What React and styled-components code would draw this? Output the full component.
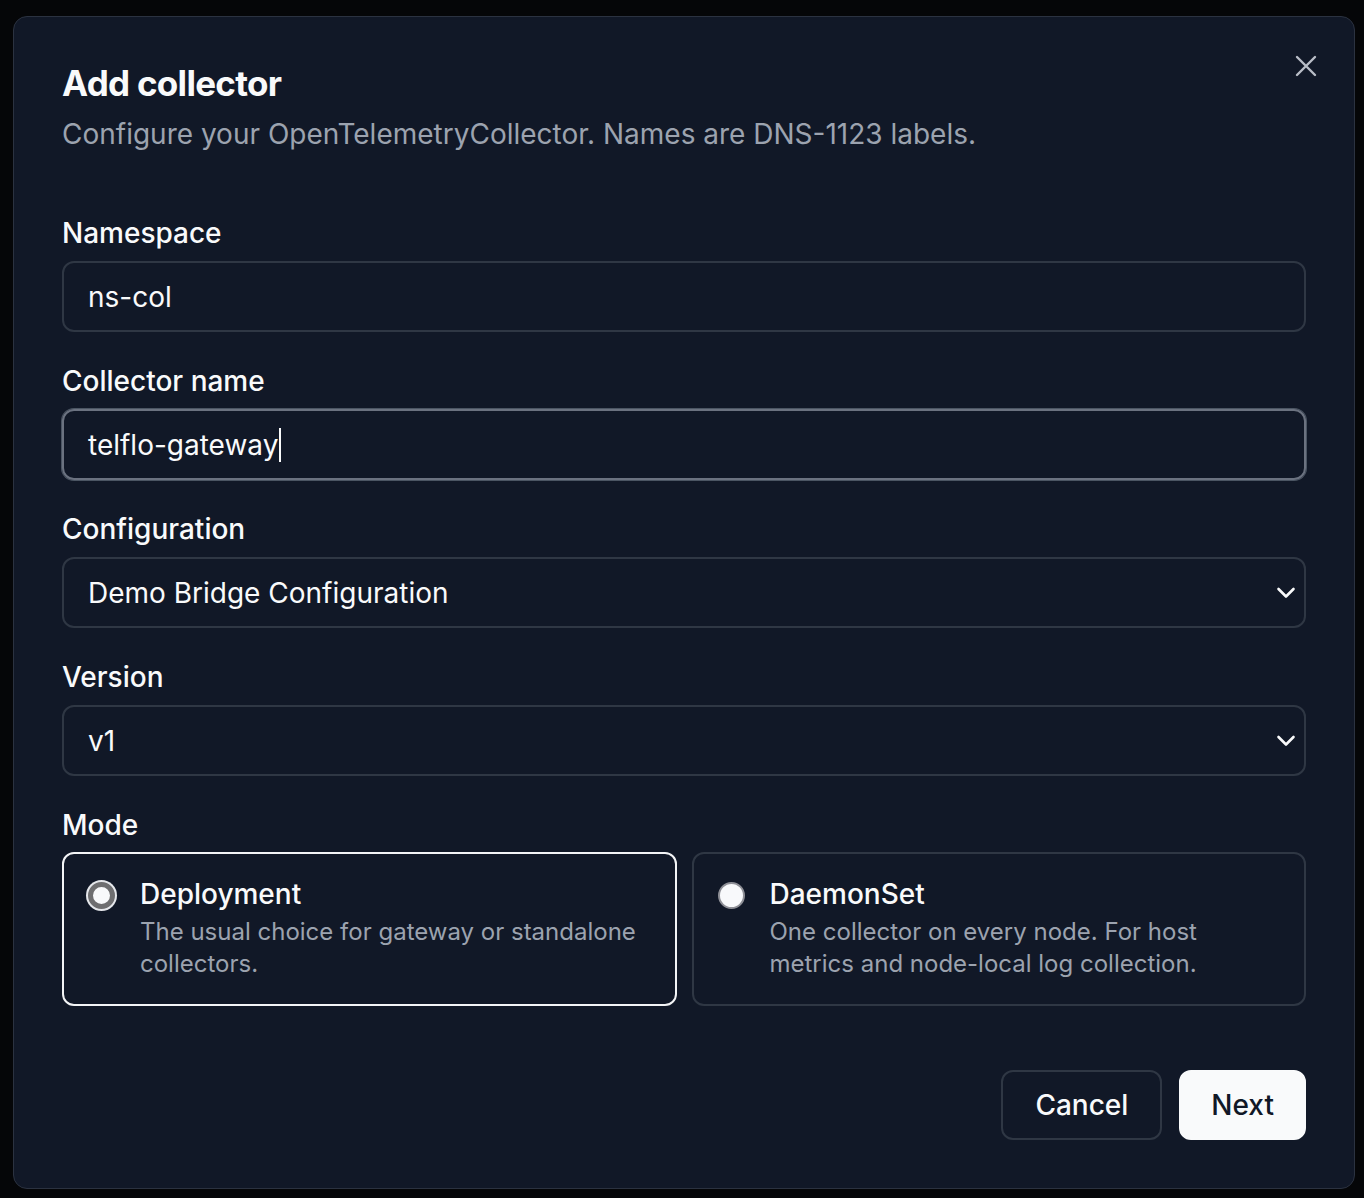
import React from "react";
import styled, { createGlobalStyle } from "styled-components";

const Global = createGlobalStyle`
  html, body { margin: 0; padding: 0; background: #050608; }
  body { font-family: Inter, "Noto Sans", sans-serif; -webkit-font-smoothing: antialiased; }
  * { box-sizing: border-box; }
`;

const Page = styled.div`
  min-height: 1198px;
  padding: 16px 9px 8px 13px;
  background: #050608;
`;

const Dialog = styled.div`
  position: relative;
  width: 1342px;
  background: #111827;
  border: 1px solid #2b3240;
  border-radius: 14px;
  padding: 48px;
  color: #f9fafb;
`;

const Close = styled.button`
  position: absolute;
  top: 31px;
  right: 30px;
  width: 36px;
  height: 36px;
  padding: 0;
  border: 0;
  background: transparent;
  color: #b9bec7;
  display: flex;
  align-items: center;
  justify-content: center;
`;

const Header = styled.div`
  display: flex;
  flex-direction: column;
  gap: 13px;
`;

const Title = styled.h2`
  margin: 0;
  font-size: 35px;
  line-height: 36px;
  font-weight: 700;
  letter-spacing: -0.02em;
  color: #f9fafb;
`;

const Subtitle = styled.p`
  margin: 0;
  font-size: 28px;
  line-height: 40px;
  color: #9ca3af;
`;

const Form = styled.div`
  margin-top: 65px;
  display: flex;
  flex-direction: column;
  gap: 35px;
`;

const Field = styled.div`
  display: flex;
  flex-direction: column;
  gap: ${(p) => p.$gap || 14}px;
`;

const Label = styled.div`
  font-size: 28px;
  line-height: 28px;
  font-weight: 500;
  color: #f9fafb;
`;

const Control = styled.div`
  height: 71px;
  border-radius: 12px;
  border: ${(p) => (p.$focused ? "2px solid #6b7280" : "2px solid #2f3744")};
  box-shadow: ${(p) => (p.$focused ? "0 0 0 1px #4b5563" : "none")};
  padding: 0 ${(p) => (p.$select ? 8 : 24)}px 0 24px;
  display: flex;
  align-items: center;
  justify-content: space-between;
  font-size: 28px;
  color: #f9fafb;
`;

const Value = styled.span`
  display: inline-flex;
  align-items: center;
`;

const Caret = styled.span`
  display: inline-block;
  width: 2px;
  height: 34px;
  background: #f9fafb;
  margin-left: 1px;
`;

const Cards = styled.div`
  display: grid;
  grid-template-columns: 1fr 1fr;
  gap: 15px;
`;

const Card = styled.div`
  border-radius: 12px;
  border: 2px solid ${(p) => (p.$selected ? "#f3f4f6" : "#2f3744")};
  padding: 26px 24px 24px;
  display: flex;
  gap: 25px;
  align-items: flex-start;
`;

const Radio = styled.span`
  flex: none;
  margin-top: 2px;
  width: 27px;
  height: 27px;
  border-radius: 50%;
  background: #f8f9fb;
  ${(p) =>
    p.$checked
      ? `border: 5px solid #6e6e70; box-shadow: 0 0 0 2px #e5e7eb;`
      : `border: 2px solid #8e8f96;`}
`;

const CardText = styled.div`
  display: flex;
  flex-direction: column;
  gap: 8px;
`;

const CardTitle = styled.div`
  font-size: 28px;
  line-height: 28px;
  font-weight: 500;
  color: #f9fafb;
`;

const CardDesc = styled.div`
  font-size: 24px;
  line-height: 32px;
  color: #9ca3af;
`;

const Footer = styled.div`
  margin-top: 64px;
  display: flex;
  justify-content: flex-end;
  gap: 17px;
`;

const Button = styled.button`
  height: 70px;
  padding: 0 ${(p) => (p.$primary ? 30 : 32)}px;
  border-radius: 12px;
  font-family: inherit;
  font-size: 28px;
  font-weight: 500;
  border: 2px solid ${(p) => (p.$primary ? "#f9fafb" : "#2f3744")};
  background: ${(p) => (p.$primary ? "#f9fafb" : "transparent")};
  color: ${(p) => (p.$primary ? "#111827" : "#f9fafb")};
`;

const Chevron = () => (
  <svg width="20" height="12" viewBox="0 0 20 12" fill="none">
    <polyline points="2.5,2 10,9.5 17.5,2" stroke="#f9fafb" strokeWidth="2.6" strokeLinecap="round" strokeLinejoin="round" />
  </svg>
);

const XIcon = () => (
  <svg width="22" height="22" viewBox="0 0 22 22" fill="none">
    <path d="M2 2L20 20M20 2L2 20" stroke="currentColor" strokeWidth="2.4" strokeLinecap="round" />
  </svg>
);

export default function App() {
  return (
    <>
      <Global />
      <Page>
        <Dialog>
          <Close aria-label="Close">
            <XIcon />
          </Close>
          <Header>
            <Title>Add collector</Title>
            <Subtitle>Configure your OpenTelemetryCollector. Names are DNS-1123 labels.</Subtitle>
          </Header>
          <Form>
            <Field>
              <Label>Namespace</Label>
              <Control>
                <Value>ns-col</Value>
              </Control>
            </Field>
            <Field>
              <Label>Collector name</Label>
              <Control $focused>
                <Value>
                  telflo-gateway
                  <Caret />
                </Value>
              </Control>
            </Field>
            <Field>
              <Label>Configuration</Label>
              <Control $select>
                <Value>Demo Bridge Configuration</Value>
                <Chevron />
              </Control>
            </Field>
            <Field>
              <Label>Version</Label>
              <Control $select>
                <Value>v1</Value>
                <Chevron />
              </Control>
            </Field>
            <Field $gap={13}>
              <Label>Mode</Label>
              <Cards>
                <Card $selected>
                  <Radio $checked />
                  <CardText>
                    <CardTitle>Deployment</CardTitle>
                    <CardDesc>The usual choice for gateway or standalone collectors.</CardDesc>
                  </CardText>
                </Card>
                <Card>
                  <Radio />
                  <CardText>
                    <CardTitle>DaemonSet</CardTitle>
                    <CardDesc>One collector on every node. For host metrics and node-local log collection.</CardDesc>
                  </CardText>
                </Card>
              </Cards>
            </Field>
          </Form>
          <Footer>
            <Button>Cancel</Button>
            <Button $primary>Next</Button>
          </Footer>
        </Dialog>
      </Page>
    </>
  );
}
